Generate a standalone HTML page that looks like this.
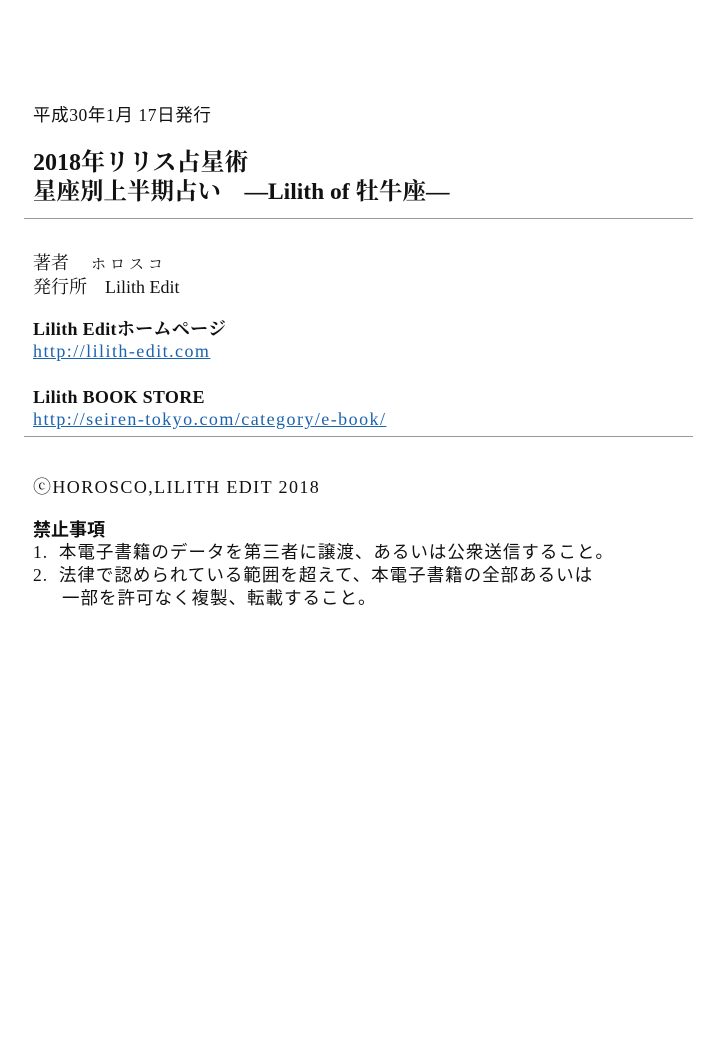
<!DOCTYPE html>
<html><head><meta charset="utf-8"><style>
body{margin:0;width:720px;height:1040px;background:#fff;position:relative;font-family:"Liberation Serif","Noto Serif CJK SC",serif;color:#111;font-size:18px;}
.a{position:absolute;left:33px;line-height:22px;white-space:nowrap}
.g{font-family:"Liberation Serif","Noto Sans CJK JP",sans-serif}
b{font-weight:bold}
a{color:#1a63b0;text-decoration:underline;letter-spacing:1.45px}
.hr{position:absolute;left:24px;width:669px;height:1px;background:#999}
</style></head><body>
<div class="a g" style="top:104px;font-size:17.5px;letter-spacing:0.6px">平成30年1月 17日発行</div>
<div class="a" style="top:149px;font-size:24px;line-height:29px;font-weight:bold">2018年リリス占星術<br><span style="font-size:23.5px">星座別上半期占い　―Lilith of 牡牛座―</span></div>
<div class="hr" style="top:218px"></div>
<div class="a" style="top:252px">著者　<span style="font-size:15px;letter-spacing:4px;margin-left:4px">ホロスコ</span><br>発行所　Lilith Edit</div>
<div class="a" style="top:318px;letter-spacing:0.3px"><b>Lilith Editホームページ</b><br><a>http://lilith-edit.com</a></div>
<div class="a" style="top:386px;letter-spacing:0.3px"><b>Lilith BOOK STORE</b><br><a>http://seiren-tokyo.com/category/e-book/</a></div>
<div class="hr" style="top:436px"></div>
<div class="a" style="top:476px;letter-spacing:1.4px">ⓒHOROSCO,LILITH EDIT 2018</div>
<div class="a g" style="top:519px"><b>禁止事項</b></div>
<div class="a g" style="top:541px;line-height:23px;font-size:17.5px;letter-spacing:1px">1.&nbsp;&nbsp;本電子書籍のデータを第三者に譲渡、あるいは公衆送信すること。<br>2.&nbsp;&nbsp;法律で認められている範囲を超えて、本電子書籍の全部あるいは<br><span style="padding-left:29px">一部を許可なく複製、転載すること。</span></div>
</body></html>
